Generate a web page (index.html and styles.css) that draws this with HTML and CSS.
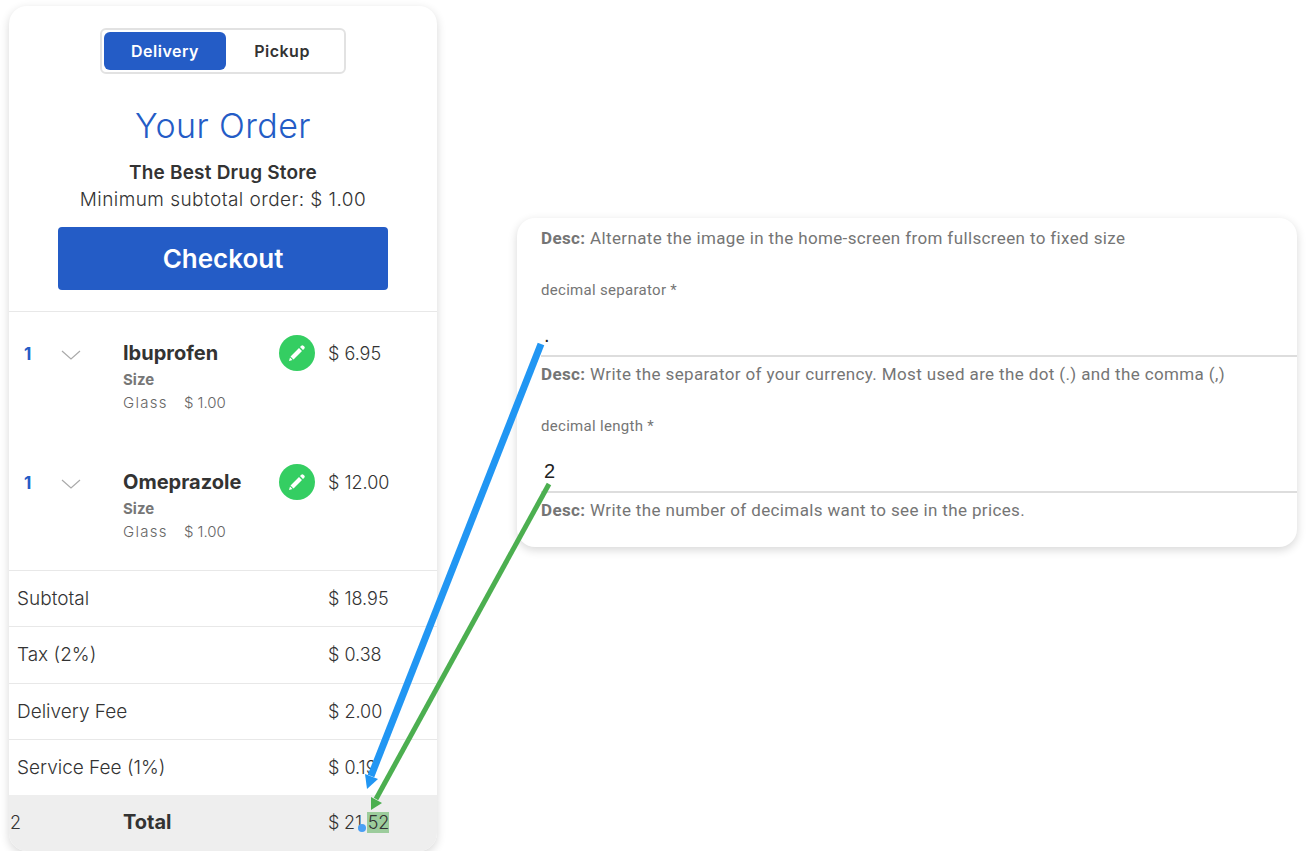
FILE: index.html
```html
<!DOCTYPE html>
<html lang="en">
<head>
  <meta charset="utf-8" />
  <title>Your Order</title>
  <link rel="stylesheet" href="styles.css">
</head>
<body>
<div class="page">

  <!-- order card -->
  <div class="order">
    <div class="order-head">
      <div class="toggle">
        <div class="toggle-btn active">Delivery</div>
        <div class="toggle-btn">Pickup</div>
      </div>
      <h1 class="title">Your Order</h1>
      <div class="store">The Best Drug Store</div>
      <div class="minimum">Minimum subtotal order: $ 1.00</div>
      <div class="checkout">Checkout</div>
    </div>

    <div class="items">
      <div class="item">
        <div class="qty">1</div>
        <svg class="chevron" width="20" height="10" viewBox="0 0 20 10"><path d="M1 1l9 8 9-8" fill="none" stroke="#aaa" stroke-width="1.2"/></svg>
        <div class="item-info">
          <div class="item-name">Ibuprofen</div>
          <div class="item-opt">Size</div>
          <div class="item-val"><span class="glass">Glass</span><span>$ 1.00</span></div>
        </div>
        <div class="edit">
          <svg width="18" height="18" viewBox="0 0 18 18"><path d="M12 3l1.300-1.300a1.500 1.500 0 0 1 2.100 0l.9.9a1.500 1.500 0 0 1 0 2.100L15 6zM11 4l3 3-8.500 8.500-3-3zM2 13.500l2.500 2.500L1 17z" fill="#fff"/></svg>
        </div>
        <div class="price">$ 6.95</div>
      </div>
      <div class="item">
        <div class="qty">1</div>
        <svg class="chevron" width="20" height="10" viewBox="0 0 20 10"><path d="M1 1l9 8 9-8" fill="none" stroke="#aaa" stroke-width="1.2"/></svg>
        <div class="item-info">
          <div class="item-name">Omeprazole</div>
          <div class="item-opt">Size</div>
          <div class="item-val"><span class="glass">Glass</span><span>$ 1.00</span></div>
        </div>
        <div class="edit">
          <svg width="18" height="18" viewBox="0 0 18 18"><path d="M12 3l1.300-1.300a1.500 1.500 0 0 1 2.100 0l.9.9a1.500 1.500 0 0 1 0 2.100L15 6zM11 4l3 3-8.500 8.500-3-3zM2 13.500l2.500 2.500L1 17z" fill="#fff"/></svg>
        </div>
        <div class="price">$ 12.00</div>
      </div>
    </div>

    <div class="row"><span>Subtotal</span><span class="row-price">$ 18.95</span></div>
    <div class="row"><span>Tax (2%)</span><span class="row-price">$ 0.38</span></div>
    <div class="row"><span>Delivery Fee</span><span class="row-price">$ 2.00</span></div>
    <div class="row"><span>Service Fee (1%)</span><span class="row-price">$ 0.19</span></div>
    <div class="total">
      <span class="total-qty">2</span>
      <span class="total-label">Total</span>
      <span class="total-price">$ 21.<span class="hl">52</span></span>
    </div>
  </div>

  <!-- settings card -->
  <div class="settings">
    <p class="desc"><b>Desc:</b> Alternate the image in the home-screen from fullscreen to fixed size</p>
    <label class="field-label">decimal separator *</label>
    <div class="field-value">.</div>
    <p class="desc"><b>Desc:</b> Write the separator of your currency. Most used are the dot (.) and the comma (,)</p>
    <label class="field-label">decimal length *</label>
    <div class="field-value">2</div>
    <p class="desc"><b>Desc:</b> Write the number of decimals want to see in the prices.</p>
  </div>

</div>

<!-- annotation arrows -->
<svg class="arrows" width="1306" height="863" viewBox="0 0 1306 863">
  <path d="M541 344L371 776" stroke="#2196f3" stroke-width="7" fill="none"/>
  <path d="M365 774l13 5-11 10z" fill="#2196f3"/>
  <path d="M549 484L376 799" stroke="#4caf50" stroke-width="5" fill="none"/>
  <path d="M371 797l11 6-11 7z" fill="#4caf50"/>
  <circle cx="362" cy="828" r="4" fill="#4a9ff5"/>
</svg>
</body>
</html>
```

FILE: styles.css
```css
*{
  box-sizing: border-box;
}
body{
  margin: 0;
  background: #fff;
  font-family: 'Inter', sans-serif;
  color: #333;
  overflow: hidden;
}
.page{
  display: flex;
  align-items: flex-start;
  padding: 6px 9px 0;
  gap: 80px;
}
.arrows{
  position: absolute;
  left: 0;
  top: 0;
}

/* order card */
.order{
  width: 428px;
  height: 845px;
  border-radius: 18px;
  background: #fff;
  box-shadow: 0 3px 10px rgba(0,0,0,0.16);
  overflow: hidden;
  flex-shrink: 0;
}
.order-head{
  height: 306px;
  padding-top: 22px;
  display: flex;
  flex-direction: column;
  align-items: center;
  border-bottom: 1px solid #e8e8e8;
}
.toggle{
  width: 246px;
  height: 46px;
  padding: 2px;
  display: flex;
  border: 2px solid #e2e2e2;
  border-radius: 6px;
}
.toggle-btn{
  width: 112px;
  flex-shrink: 0;
  line-height: 38px;
  text-align: center;
  font-size: 16px;
  font-weight: 600;
  letter-spacing: 0.5px;
  border-radius: 6px;
}
.toggle-btn.active{
  width: 122px;
  background: #245cc6;
  color: #fff;
}
.title{
  margin: 30px 0 0;
  font-size: 34px;
  line-height: 44px;
  font-weight: 300;
  letter-spacing: 0.4px;
  color: #245cc6;
}
.store{
  margin-top: 12px;
  font-size: 19px;
  line-height: 26px;
  font-weight: 600;
  letter-spacing: 0.2px;
}
.minimum{
  font-size: 19px;
  line-height: 28px;
  font-weight: 300;
  letter-spacing: 0.45px;
}
.checkout{
  width: 330px;
  height: 63px;
  margin-top: 13px;
  background: #245cc6;
  border-radius: 4px;
  color: #fff;
  font-size: 26px;
  font-weight: 600;
  line-height: 63px;
  text-align: center;
}

/* items */
.items{
  height: 258px;
  padding-top: 23px;
}
.item{
  height: 129px;
  display: flex;
  align-items: flex-start;
}
.qty{
  width: 52px;
  padding-left: 15px;
  font-size: 17px;
  font-weight: 700;
  color: #245cc6;
  line-height: 38px;
}
.chevron{
  width: 20px;
  margin-top: 15px;
  flex-shrink: 0;
}
.item-info{
  width: 156px;
  margin-left: 42px;
}
.item-name{
  font-size: 20px;
  font-weight: 700;
  line-height: 36px;
}
.item-opt{
  margin-top: -1px;
  font-size: 15px;
  font-weight: 700;
  color: #777;
  line-height: 20px;
}
.item-val{
  display: flex;
  gap: 16px;
  font-size: 15px;
  font-weight: 300;
  color: #666;
  line-height: 26px;
}
.glass{
  letter-spacing: 1.3px;
}
.edit{
  width: 36px;
  height: 36px;
  border-radius: 50%;
  background: #34ce62;
  display: flex;
  align-items: center;
  justify-content: center;
}
.price{
  margin-left: 13px;
  font-size: 18px;
  font-weight: 300;
  line-height: 38px;
}

/* totals */
.row{
  height: 56.25px;
  padding: 0 8px;
  display: flex;
  align-items: center;
  border-top: 1px solid #e8e8e8;
  font-size: 19px;
  font-weight: 300;
}
.row-price{
  position: absolute;
  left: 328px;
  font-size: 18px;
}
.total{
  height: 56px;
  padding-bottom: 2px;
  display: flex;
  align-items: center;
  background: #eee;
  font-size: 18px;
}
.total-qty{
  width: 114px;
  padding-left: 1px;
  font-weight: 300;
}
.total-label{
  width: 205px;
  font-size: 20px;
  font-weight: 700;
}
.total-price{
  font-weight: 300;
  letter-spacing: -0.2px;
}
.hl{
  padding-left: 1px;
  background: #9ccc9c;
}

/* settings card */
.settings{
  width: 780px;
  height: 329px;
  margin-top: 212px;
  padding: 8px 0 0;
  border-radius: 18px;
  background: #fff;
  box-shadow: 0 3px 10px rgba(0,0,0,0.16);
  font-family: 'Roboto', sans-serif;
  overflow: hidden;
}
.desc{
  margin: 0;
  padding-left: 24px;
  font-size: 17px;
  line-height: 24px;
  letter-spacing: 0.37px;
  color: #757575;
}
.desc b{
  font-weight: 700;
}
.field-label{
  display: block;
  margin-top: 31px;
  padding-left: 24px;
  font-size: 15px;
  line-height: 18px;
  letter-spacing: 0.3px;
  color: #757575;
}
.field-value{
  height: 58px;
  margin-left: 24px;
  padding: 21px 0 0 3px;
  border-bottom: 2px solid #ddd;
  font-family: 'Liberation Sans', sans-serif;
  font-size: 20px;
  line-height: 30px;
  color: #222;
}
.field-value + .desc{
  margin-top: 5px;
}
```
